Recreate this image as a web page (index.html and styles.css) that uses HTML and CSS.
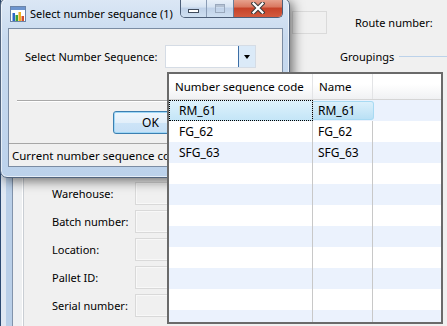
FILE: index.html
```html
<!DOCTYPE html>
<html lang="en">
<head>
    <meta charset="UTF-8">
    <title>Select number sequance</title>
    <link rel="stylesheet" href="styles.css">
</head>
<body>
    <div class="form">
        <div class="rail"></div>
        <div class="main">
            <div class="top-row">
                <div class="top-box"></div>
                <span>Route number:</span>
            </div>
            <div class="groupings">Groupings</div>
            <div class="fields">
                <span>Warehouse:</span><div class="field"></div>
                <span>Batch number:</span><div class="field"></div>
                <span>Location:</span><div class="field"></div>
                <span>Pallet ID:</span><div class="field"></div>
                <span>Serial number:</span><div class="field"></div>
            </div>
        </div>
    </div>

    <div class="dialog">
        <div class="titlebar">
            <svg class="app-icon" width="16" height="16" viewBox="0 0 16 16">
                <rect x="0.5" y="0.5" width="15" height="15" fill="#fff" stroke="#6b84a8"/>
                <rect x="1" y="1" width="14" height="3" fill="#6d95cf"/>
                <rect x="2.5" y="7" width="2.5" height="8" fill="#2d68c8"/>
                <rect x="5.5" y="9" width="2.5" height="6" fill="#3aa23c"/>
                <rect x="8.5" y="6" width="2.5" height="9" fill="#f2b01e"/>
                <rect x="11.5" y="10" width="2.5" height="5" fill="#d2502c"/>
            </svg>
            <span class="title">Select number sequance (1)</span>
            <div class="caption">
                <div class="cap-btn cap-min"><span class="min-glyph"></span></div>
                <div class="cap-btn cap-max"><span class="max-glyph"></span></div>
                <div class="cap-btn cap-close">
                    <svg width="14" height="12" viewBox="0 0 14 12">
                        <path d="M2.5 1.5 L11.5 10.5 M11.5 1.5 L2.5 10.5" stroke="#3b3b3b" stroke-width="4.2" stroke-linecap="square"/>
                        <path d="M2.5 1.5 L11.5 10.5 M11.5 1.5 L2.5 10.5" stroke="#fff" stroke-width="2.2" stroke-linecap="square"/>
                    </svg>
                </div>
            </div>
        </div>
        <div class="client">
            <div class="seq-row">
                <label class="seq-label">Select Number Sequence:</label>
                <div class="combo"><span class="combo-btn"></span></div>
            </div>
            <div class="sep"></div>
            <div class="btn-row"><button class="ok">OK</button></div>
            <div class="status"><span class="status-text">Current number sequence code:</span></div>
        </div>
    </div>

    <div class="lookup">
        <div class="grid-head">
            <div class="col1">Number sequence code</div>
            <div class="col2">Name</div>
            <div class="col3"></div>
        </div>
        <div class="row selected"><div class="col1">RM_61</div><div class="col2">RM_61</div><div class="col3"></div></div>
        <div class="row"><div class="col1">FG_62</div><div class="col2">FG_62</div><div class="col3"></div></div>
        <div class="row"><div class="col1">SFG_63</div><div class="col2">SFG_63</div><div class="col3"></div></div>
        <div class="row"><div class="col1"></div><div class="col2"></div><div class="col3"></div></div>
        <div class="row"><div class="col1"></div><div class="col2"></div><div class="col3"></div></div>
        <div class="row"><div class="col1"></div><div class="col2"></div><div class="col3"></div></div>
        <div class="row"><div class="col1"></div><div class="col2"></div><div class="col3"></div></div>
        <div class="row"><div class="col1"></div><div class="col2"></div><div class="col3"></div></div>
        <div class="row"><div class="col1"></div><div class="col2"></div><div class="col3"></div></div>
        <div class="row"><div class="col1"></div><div class="col2"></div><div class="col3"></div></div>
        <div class="row"><div class="col1"></div><div class="col2"></div><div class="col3"></div></div>
    </div>
</body>
</html>
```

FILE: styles.css
```css
* {
    box-sizing: border-box;
}
body {
    margin: 0;
    width: 447px;
    height: 326px;
    overflow: hidden;
    position: relative;
    background: #f0f0f0;
    font-family: "Noto Sans", "Open Sans", sans-serif;
    font-size: 11px;
    color: #000;
}

/* form behind the dialog */
.form {
    display: flex;
    height: 326px;
}
.rail {
    width: 24px;
    flex: none;
    background: linear-gradient(to right,
        #2c4a72 0, #2c4a72 1px,
        #dfe8f3 1px, #dfe8f3 6px,
        #b9cfe8 6px, #b9cfe8 12px,
        #8193ab 12px, #8193ab 13px,
        #eef0f2 13px, #eef0f2 22px,
        #fff 22px, #fff 23px,
        #c9ced4 23px);
}
.main {
    flex: 1;
}
.top-row {
    display: flex;
    align-items: center;
    gap: 28px;
    padding: 11px 0 0 268px;
}
.top-box {
    width: 35px;
    height: 23px;
    border: 1px solid #dadada;
}
.groupings {
    display: flex;
    align-items: center;
    gap: 5px;
    height: 16px;
    margin: 14px 0 0 316px;
}
.groupings::after {
    content: "";
    flex: 1;
    height: 1px;
    background: #bcd2ea;
}
.fields {
    display: grid;
    grid-template-columns: 83px 100px;
    grid-auto-rows: 23px;
    row-gap: 5px;
    align-items: center;
    margin: 118px 0 0 28px;
}
.field {
    height: 23px;
    border: 1px solid #d9d9d9;
    box-shadow: inset 0 0 0 1px #f8f8f8;
}

/* dialog window */
.dialog {
    position: absolute;
    left: 0;
    top: -2px;
    width: 290px;
    height: 180px;
    padding: 0 6px 10px 7px;
    display: flex;
    flex-direction: column;
    border: 1px solid #52647d;
    border-radius: 7px;
    background: linear-gradient(#dbe7f5, #c8daef 40px, #bcd2eb);
    box-shadow: inset 0 0 0 1px rgba(255, 255, 255, 0.6), 3px 3px 12px rgba(0, 0, 0, 0.55);
}
.titlebar {
    height: 29px;
    display: flex;
    align-items: center;
}
.app-icon {
    flex: none;
    margin-left: 2px;
}
.title {
    margin-left: 4px;
    font-size: 11px;
    white-space: nowrap;
    color: #000;
}
.caption {
    margin-left: auto;
    align-self: flex-start;
    flex: none;
    display: flex;
    height: 19px;
    border: 1px solid #4c5e78;
    border-top: none;
    border-radius: 0 0 5px 5px;
    overflow: hidden;
}
.cap-btn {
    display: flex;
    align-items: center;
    justify-content: center;
    background: linear-gradient(#eaf1f9, #d6e3f2 45%, #bfd1e8 50%, #cfdff1);
}
.cap-min {
    width: 26px;
    border-right: 1px solid #8a9cb5;
}
.cap-max {
    width: 27px;
    border-right: 1px solid #6b7f9a;
}
.cap-close {
    width: 48px;
    background: linear-gradient(#e9a793, #d9775f 45%, #c64228 50%, #d35a3e);
}
.min-glyph {
    width: 11px;
    height: 4px;
    margin-top: 5px;
    background: #fff;
    border: 1px solid #3f4b5c;
}
.max-glyph {
    width: 10px;
    height: 9px;
    border: 1px solid #9aa9bd;
    box-shadow: inset 0 2px 0 #b4c1d2;
}

.client {
    flex: 1;
    display: flex;
    flex-direction: column;
    background: #f0f0f0;
    border: 1px solid #7b8ca3;
}
.seq-row {
    display: flex;
    align-items: center;
    padding: 16px 0 0 16px;
}
.seq-label {
    width: 140px;
}
.combo {
    width: 91px;
    height: 23px;
    display: flex;
    justify-content: flex-end;
    background: #fff;
    border: 1px solid #d5dce5;
}
.combo-btn {
    width: 17px;
    display: flex;
    align-items: center;
    justify-content: center;
    background: #dbeaf8;
    border-left: 1px solid #3c6ea6;
}
.combo-btn::after {
    content: "";
    border-left: 3px solid transparent;
    border-right: 3px solid transparent;
    border-top: 4px solid #000;
}
.sep {
    margin: 32px 8px 0 8px;
    height: 2px;
    border-top: 1px solid #a9a9a9;
    border-bottom: 1px solid #fff;
}
.btn-row {
    padding: 9px 0 0 104px;
}
.ok {
    width: 75px;
    height: 23px;
    padding: 0;
    font-family: inherit;
    font-size: 12px;
    color: #000;
    border: 1px solid #3c7fb1;
    border-radius: 3px;
    background: linear-gradient(#f0f7fd, #e2effa 50%, #cde4f7 51%, #c6e0f6);
    box-shadow: inset 0 0 0 1px #9fd7f6;
}
.status {
    margin-top: auto;
    height: 23px;
    display: flex;
    align-items: center;
    padding-left: 3px;
    font-size: 11.5px;
    border-top: 1px solid #a6a6a6;
}
.status-text {
    width: 155px;
    white-space: nowrap;
    overflow: hidden;
}

/* lookup popup */
.lookup {
    position: absolute;
    left: 167px;
    top: 72px;
    width: 276px;
    height: 252px;
    border: 2px solid #6a6a6a;
    background: #fff;
    overflow: hidden;
    font-size: 11.5px;
}
.grid-head {
    display: flex;
    height: 26px;
    border-bottom: 1px solid #d5d5d5;
    background: linear-gradient(#fff, #fff 40%, #f0f1f3);
}
.grid-head > div {
    display: flex;
    align-items: center;
    padding-left: 6px;
}
.col1 {
    width: 144px;
    flex: none;
    border-right: 1px solid #c8c8c8;
}
.col2 {
    width: 60px;
    flex: none;
    border-right: 1px solid #c8c8c8;
}
.col3 {
    flex: 1;
}
.grid-head .col1,
.grid-head .col2 {
    border-right-color: #e3e4e6;
}
.row {
    display: flex;
    height: 21px;
    font-size: 12px;
}
.row:nth-child(even) {
    background: #ebf2fd;
}
.row > div {
    display: flex;
    align-items: center;
}
.row .col1 {
    padding-left: 10px;
}
.row .col2 {
    padding-left: 5px;
}
.selected .col1 {
    background: linear-gradient(#dff2fc, #c3e5f7);
    outline: 1px dotted #000;
    outline-offset: -1px;
}
.selected .col2 {
    width: 61px;
    margin: 1px 0;
    border: 1px solid #a8daf3;
    border-left: none;
    border-radius: 0 3px 3px 0;
    background: linear-gradient(#dcf0fb, #b9e0f5);
    padding-left: 5px;
}
```
